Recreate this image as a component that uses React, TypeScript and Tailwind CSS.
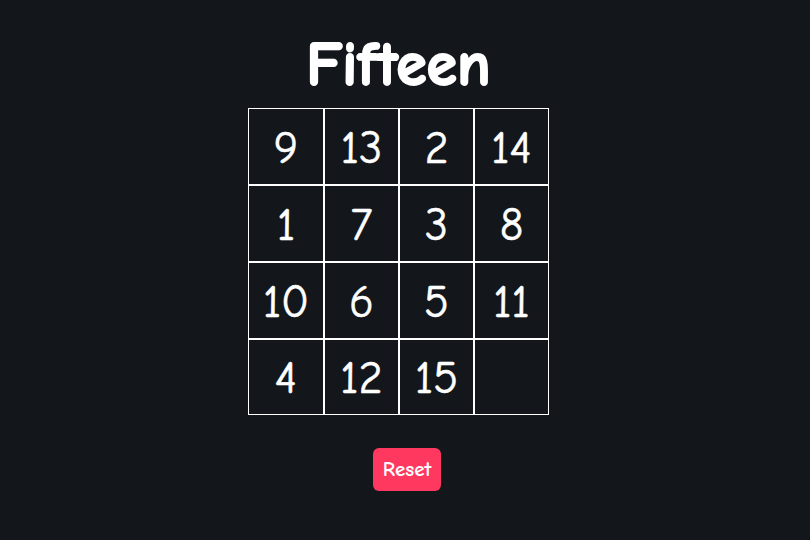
import React from "react";

const tiles = [9, 13, 2, 14, 1, 7, 3, 8, 10, 6, 5, 11, 4, 12, 15, 0];

const App = () => {
  return (
    <div
      className="w-full h-[540px] bg-[#13171c] text-white"
      style={{ fontFamily: '"Comic Sans MS", "Comic Neue", cursive, sans-serif' }}
    >
      <div className="flex flex-col items-center w-[797px]">
        {/* title */}
        <h1 className="mt-[32px] text-[62px] leading-[66px] font-black [-webkit-text-stroke:2px_white]">
          Fifteen
        </h1>

        {/* board */}
        <div className="grid grid-cols-[76px_75px_75px_75px] grid-rows-[77px_77px_77px_76px] mt-[10px]">
          {tiles.map((n, i) => (
            <div
              key={i}
              className="flex justify-center items-center border border-white bg-[#13171c] text-[46px] font-normal pt-[3px] [-webkit-text-stroke:0.6px_white]"
            >
              {n ? n : ""}
            </div>
          ))}
        </div>

        {/* reset */}
        <button className="mt-[33px] ml-[17px] w-[68px] h-[43px] rounded-md bg-[#ff3860] text-white text-[21px] font-bold">
          Reset
        </button>
      </div>
    </div>
  );
};

export default App;
